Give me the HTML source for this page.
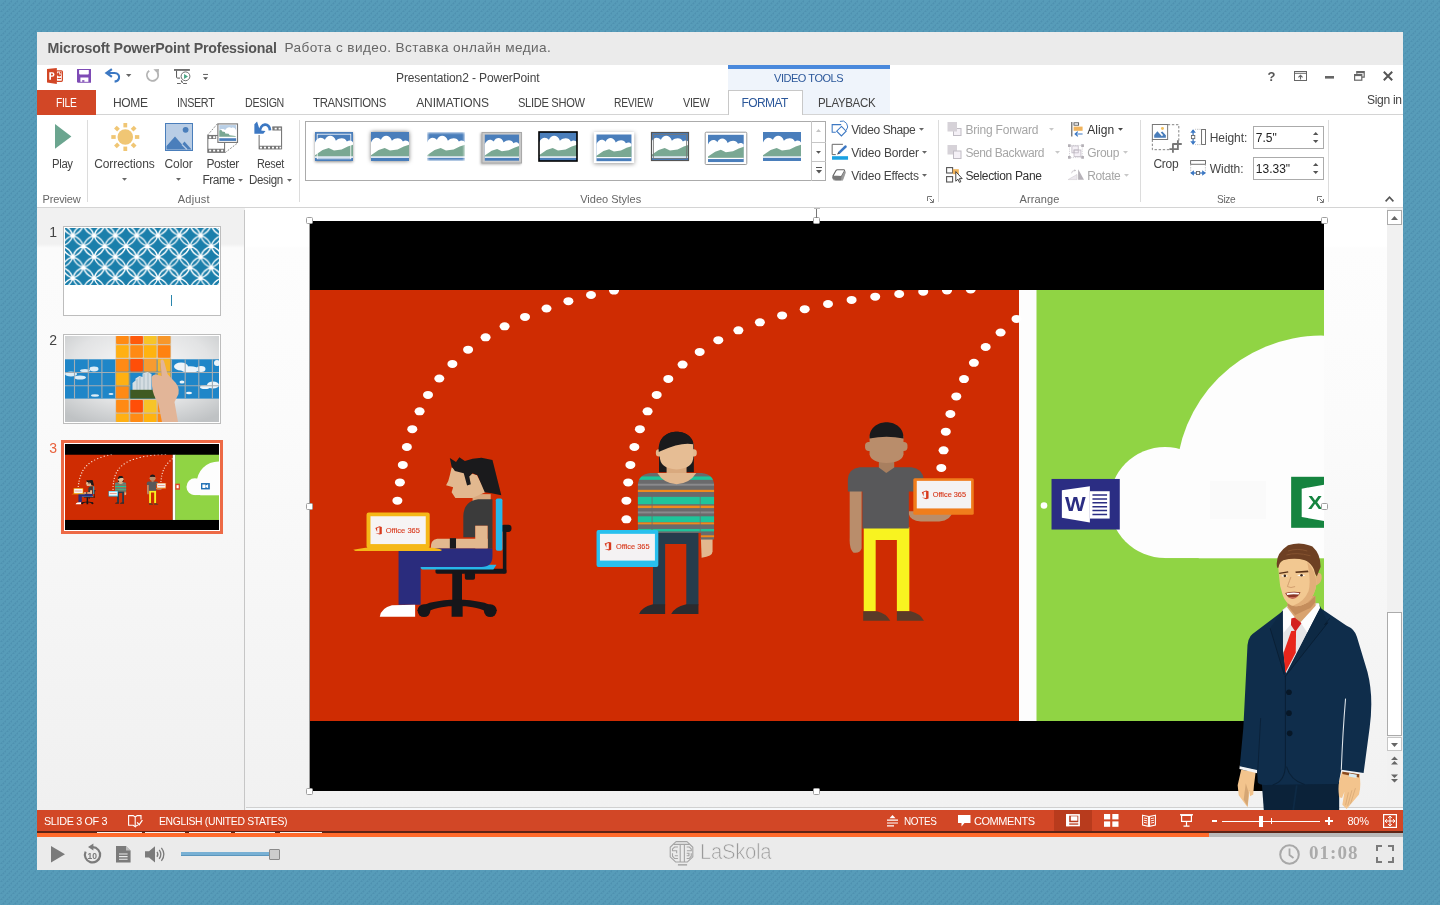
<!DOCTYPE html>
<html lang="ru">
<head>
<meta charset="utf-8">
<title>Microsoft PowerPoint Professional</title>
<style>
*{box-sizing:border-box;margin:0;padding:0}
html,body{width:1440px;height:905px;overflow:hidden}
body{font-family:"Liberation Sans","DejaVu Sans",sans-serif;font-size:12px;color:#444;
 background:#569bb8;position:relative}
.abs{position:absolute}
#win{will-change:transform;position:absolute;left:37px;top:32px;width:1366px;height:838px;background:#fff;overflow:hidden}
.t{position:absolute;white-space:nowrap;line-height:1}
svg{overflow:visible}
svg.clip{overflow:hidden}
</style>
</head>
<body>
<svg class="abs" style="left:0;top:0" width="1440" height="905"><defs><pattern id="bgp" width="6" height="6" patternUnits="userSpaceOnUse"><rect width="6" height="6" fill="#579cb9"/><g fill="#4688a9" opacity=".55"><circle cx="5.500" cy="1.500" r="1"/><circle cx="3.500" cy="3.500" r="1"/><circle cx="1.500" cy="5.500" r="1"/></g><path d="M-1 7L7 -1" stroke="#4c90af" stroke-width=".9" opacity=".35"/><path d="M-1 1L1 -1M5 7L7 5" stroke="#4c90af" stroke-width=".9" opacity=".35"/></pattern></defs><rect width="1440" height="905" fill="url(#bgp)"/></svg>
<div id="win">
<!-- p1_title -->
<div class="abs" style="left:0.0px;top:0.0px;width:1366.0px;height:33.0px;background:#ebebeb;"></div>
<span class="t" style="left:10.5px;top:8.8px;font-size:14.2px;letter-spacing:-0.17px;color:#555;font-weight:bold;">Microsoft PowerPoint Professional</span>
<span class="t" style="left:247.5px;top:9.3px;font-size:13.6px;letter-spacing:0.40px;color:#666;">Работа с видео. Вставка онлайн медиа.</span>
<svg class="abs" style="left:10.0px;top:36.0px;" width="17" height="16" viewBox="0 0 17 16"><rect x="9.200" y="2.800" width="6.200" height="10.500" rx="1" fill="#fff" stroke="#d24726" stroke-width="1.200"/>
<path d="M10.500 10.500h3.600" stroke="#d24726" stroke-width="1.100"/>
<path d="M12.200 4.200a2.200 2.200 0 1 0 2.200 2.300h-2.200z" fill="#d24726"/><path d="M12.900 3.600a2 2 0 0 1 1.900 1.900h-1.900z" fill="#d24726"/>
<path d="M0 1L9.840 -.1V15.950L0 14.600Z" fill="#d24726"/>
<path d="M2.300 4.200h2.900a2.300 2.300 0 0 1 0 4.600H4v3H2.300z M4 5.500v2h1a1 1 0 0 0 0-2z" fill="#fff" fill-rule="evenodd"/></svg>
<svg class="abs" style="left:40.0px;top:37.0px;" width="14" height="14" viewBox="0 0 14 14"><path d="M0 0h14v13.800H.8L0 13z" fill="#7e4bb5"/><path d="M2.100 .9h9.700v3.600q0 1-1 1H3.100q-1 0-1-1z" fill="#fff"/><rect x="3.400" y="8.500" width="8" height="4.300" fill="#fff"/><rect x="5.200" y="11.200" width="2.200" height="1.600" fill="#7e4bb5"/></svg>
<svg class="abs" style="left:68.0px;top:36.0px;" width="16" height="15" viewBox="0 0 16 15"><path d="M6.900 1.200L1.500 5L6.900 8.800" fill="none" stroke="#3c78c3" stroke-width="2.200" stroke-linejoin="miter"/><path d="M2.500 5H9.500C13 5 14.600 7.600 14 10.200C13.500 12.200 11.800 13.400 9.600 13.600" fill="none" stroke="#3c78c3" stroke-width="2.100"/></svg>
<svg class="abs" style="left:89.0px;top:42.0px;" width="6" height="4" viewBox="0 0 6 4"><path d="M0 0h5.400L2.700 3z" fill="#666"/></svg>
<svg class="abs" style="left:108.0px;top:36.0px;" width="15" height="15" viewBox="0 0 15 15"><path d="M4.200 2.700A5.600 5.600 0 1 0 12.600 4.800" fill="none" stroke="#b4b4b4" stroke-width="1.900"/><path d="M8.400 1.200L14 1L13.600 6.600Z" fill="#b4b4b4"/></svg>
<svg class="abs" style="left:137.0px;top:37.0px;" width="17" height="16" viewBox="0 0 17 16"><path d="M0 .95h15.900" stroke="#555" stroke-width="1.600"/><path d="M2.550 1.700v6.400q0 1 1 1h2.500" fill="none" stroke="#555" stroke-width="1"/><path d="M3 14.500h3.800M9.100 14.500h3.800" stroke="#555" stroke-width=".9"/><path d="M7.200 11.500l1.300 2.300" stroke="#444" stroke-width="1.100"/><circle cx="11.500" cy="7.300" r="4.400" fill="#fff" stroke="#666" stroke-width=".95"/><path d="M10.060 4.900L14 7.400L10.060 10z" fill="#4aa584"/></svg>
<svg class="abs" style="left:166.0px;top:42.0px;" width="6" height="7" viewBox="0 0 6 7"><path d="M.1 .45h4.900" stroke="#555" stroke-width=".95"/><path d="M.1 3.300h4.900L2.550 5.900z" fill="#555"/></svg>
<span class="t" style="left:359.0px;top:39.7px;font-size:12px;letter-spacing:-0.10px;color:#444;">Presentation2 - PowerPoint</span>
<span class="t" style="left:1230.5px;top:37.8px;font-size:13px;color:#555;font-weight:bold;">?</span>
<svg class="abs" style="left:1257.0px;top:39.0px;" width="13" height="10" viewBox="0 0 13 10"><rect x=".5" y=".5" width="12" height="9" fill="none" stroke="#666"/><path d="M.5 2.3h12" stroke="#666"/><path d="M6.5 8.6V4.4M4.4 6.3l2.1-2 2.1 2" fill="none" stroke="#666" stroke-width="1.1"/></svg>
<svg class="abs" style="left:1288.0px;top:44.0px;" width="9" height="3" viewBox="0 0 9 3"><rect width="9" height="2.6" fill="#666"/></svg>
<svg class="abs" style="left:1317.0px;top:39.0px;" width="11" height="10" viewBox="0 0 11 10"><path d="M2.8 2.8V.6h7.4v5.6H8" fill="none" stroke="#666" stroke-width="1.2"/><path d="M2.8 1.4h7.4" stroke="#666" stroke-width="1.6"/><rect x=".6" y="3.6" width="7.2" height="5.6" fill="none" stroke="#666" stroke-width="1.2"/><path d="M.6 4.3h7.2" stroke="#666" stroke-width="1.6"/></svg>
<svg class="abs" style="left:1346.0px;top:39.0px;" width="10" height="10" viewBox="0 0 10 10"><path d="M.8.8l8.4 8.4M9.2.8L.8 9.2" stroke="#555" stroke-width="2"/></svg>
<!-- p2_tabs -->
<div class="abs" style="left:691.0px;top:33.0px;width:162.0px;height:50.0px;background:#eff4fb;"></div>
<div class="abs" style="left:691.0px;top:33.0px;width:162.0px;height:4.0px;background:#4a89dc;"></div>
<span class="t" style="left:737.0px;top:40.5px;font-size:11px;letter-spacing:-0.46px;color:#2b579a;">VIDEO TOOLS</span>
<div class="abs" style="left:0.0px;top:82.0px;width:1366.0px;height:1.0px;background:#d4d4d4;"></div>
<div class="abs" style="left:0.0px;top:58.0px;width:59.0px;height:25.0px;background:#d24726;"></div>
<span class="t" style="left:19.2px;top:64.6px;font-size:12px;letter-spacing:-0.35px;transform:scaleX(0.856);transform-origin:0 0;color:#fff;">FILE</span>
<span class="t" style="left:76.0px;top:64.6px;font-size:12px;letter-spacing:-0.37px;color:#444;">HOME</span>
<span class="t" style="left:139.6px;top:64.6px;font-size:12px;letter-spacing:-0.35px;transform:scaleX(0.897);transform-origin:0 0;color:#444;">INSERT</span>
<span class="t" style="left:207.7px;top:64.6px;font-size:12px;letter-spacing:-0.35px;transform:scaleX(0.888);transform-origin:0 0;color:#444;">DESIGN</span>
<span class="t" style="left:276.4px;top:64.6px;font-size:12px;letter-spacing:-0.35px;transform:scaleX(0.951);transform-origin:0 0;color:#444;">TRANSITIONS</span>
<span class="t" style="left:379.2px;top:64.6px;font-size:12px;letter-spacing:-0.11px;color:#444;">ANIMATIONS</span>
<span class="t" style="left:480.8px;top:64.6px;font-size:12px;letter-spacing:-0.35px;transform:scaleX(0.929);transform-origin:0 0;color:#444;">SLIDE SHOW</span>
<span class="t" style="left:577.3px;top:64.6px;font-size:12px;letter-spacing:-0.35px;transform:scaleX(0.860);transform-origin:0 0;color:#444;">REVIEW</span>
<span class="t" style="left:646.3px;top:64.6px;font-size:12px;letter-spacing:-0.35px;transform:scaleX(0.901);transform-origin:0 0;color:#444;">VIEW</span>
<span class="t" style="left:781.0px;top:64.6px;font-size:12px;letter-spacing:-0.35px;transform:scaleX(0.960);transform-origin:0 0;color:#444;">PLAYBACK</span>
<div class="abs" style="left:691.0px;top:58.0px;width:75.0px;height:25.0px;background:#fff;border:1px solid #c8c8c8;border-bottom:none;"></div>
<span class="t" style="left:704.4px;top:64.6px;font-size:12px;letter-spacing:-0.55px;color:#2b579a;">FORMAT</span>
<span class="t" style="left:1330.3px;top:61.6px;font-size:12.5px;letter-spacing:-0.35px;transform:scaleX(0.969);transform-origin:0 0;color:#444;">Sign in</span>
<!-- p3_ribbon_a -->
<div class="abs" style="left:0.0px;top:175.0px;width:1366.0px;height:1.0px;background:#d4d4d4;"></div>
<svg class="abs" style="left:17.8px;top:92.4px;" width="17" height="25" viewBox="0 0 17 25"><path d="M0 0L16.4 12.4L0 24.8z" fill="#6ba58f"/></svg>
<span class="t" style="left:14.6px;top:125.7px;font-size:12px;letter-spacing:-0.35px;transform:scaleX(0.942);transform-origin:0 0;color:#444;">Play</span>
<span class="t" style="left:5.6px;top:162.0px;font-size:11px;letter-spacing:-0.17px;color:#666;">Preview</span>
<div class="abs" style="left:50.0px;top:88.0px;width:1.0px;height:82.0px;background:#dcdcdc;"></div>
<svg class="abs" style="left:73.7px;top:90.7px;" width="28.6" height="28" viewBox="0 0 28.6 28"><g transform="translate(14.3,14)"><circle r="7.8" fill="#f0c674"/><rect x="-1.9" y="-14" width="3.8" height="4.4" transform="rotate(0)" fill="#f0c674"/><rect x="-1.9" y="-14" width="3.8" height="4.4" transform="rotate(45)" fill="#f0c674"/><rect x="-1.9" y="-14" width="3.8" height="4.4" transform="rotate(90)" fill="#f0c674"/><rect x="-1.9" y="-14" width="3.8" height="4.4" transform="rotate(135)" fill="#f0c674"/><rect x="-1.9" y="-14" width="3.8" height="4.4" transform="rotate(180)" fill="#f0c674"/><rect x="-1.9" y="-14" width="3.8" height="4.4" transform="rotate(225)" fill="#f0c674"/><rect x="-1.9" y="-14" width="3.8" height="4.4" transform="rotate(270)" fill="#f0c674"/><rect x="-1.9" y="-14" width="3.8" height="4.4" transform="rotate(315)" fill="#f0c674"/></g></svg>
<span class="t" style="left:57.2px;top:125.7px;font-size:12px;letter-spacing:-0.08px;color:#444;">Corrections</span>
<svg class="abs" style="left:84.7px;top:146.0px;" width="5" height="3" viewBox="0 0 5 3"><path d="M0 0h5L2.5 2.8z" fill="#666"/></svg>
<svg class="abs" style="left:128.0px;top:91.0px;" width="28" height="28" viewBox="0 0 28 28"><rect x=".5" y=".5" width="27" height="27" fill="#b9cde5" stroke="#4a7ebb"/>
<circle cx="20.6" cy="6.8" r="2.9" fill="#4a7ebb"/>
<path d="M1.5 26.5V23L10 13.5L17 21.5L19.5 18.5L26.5 26.5Z" fill="#4a7ebb"/><path d="M17 21.5l5 5" stroke="#b9cde5" stroke-width="1.2"/></svg>
<span class="t" style="left:127.6px;top:125.7px;font-size:12px;letter-spacing:-0.14px;color:#444;">Color</span>
<svg class="abs" style="left:139.1px;top:146.0px;" width="5" height="3" viewBox="0 0 5 3"><path d="M0 0h5L2.5 2.8z" fill="#666"/></svg>
<svg class="abs" style="left:169.8px;top:90.9px;" width="32" height="30" viewBox="0 0 32 30"><g transform="translate(-6.8 -4.9) scale(.0625)">
<path d="M118 272L278 88M398 553L603 395" stroke="#777" stroke-width="14" stroke-dasharray="30 22" fill="none"/>
<rect x="122" y="278" width="268" height="270" fill="#fff" stroke="#777" stroke-width="17"/>
<path d="M122 278H255V336H122ZM122 492H390V548H122Z" fill="#777"/>
<path d="M143 292h34v30h-34zM207 292h34v30h-34zM143 508h32v28h-32zM207 508h32v28h-32zM271 508h32v28h-32zM335 508h32v28h-32z" fill="#fff"/>
<rect x="283" y="93" width="314" height="296" fill="#fff" stroke="#777" stroke-width="18"/>
<rect x="305" y="112" width="270" height="100" fill="#b9cfe6"/>
<path d="M305 200C330 160 380 170 400 190C420 150 470 130 500 160C530 140 560 160 575 200V300H305Z" fill="#fff"/>
<path d="M305 200C320 185 345 185 352 215L395 222L402 245L455 250L470 275L560 285L575 300H305Z" fill="#7aa893"/>
<rect x="305" y="322" width="270" height="43" fill="#4a7ebb"/></g></svg>
<span class="t" style="left:169.4px;top:125.7px;font-size:12px;letter-spacing:-0.38px;color:#444;">Poster</span>
<span class="t" style="left:165.5px;top:141.7px;font-size:12px;letter-spacing:-0.54px;color:#444;">Frame</span>
<svg class="abs" style="left:201.0px;top:146.8px;" width="5" height="3" viewBox="0 0 5 3"><path d="M0 0h5L2.5 2.8z" fill="#666"/></svg>
<svg class="abs" style="left:216.5px;top:89.5px;" width="30" height="28" viewBox="0 0 30 28"><g transform="translate(-53.5 -3.500) scale(.0625)">
<path d="M938 262V482H1297V138H1150" fill="none" stroke="#777" stroke-width="17"/>
<path d="M938 436H1297V490H938ZM1150 130H1297V192H1150Z" fill="#777"/>
<path d="M952 450h32v28h-32zM1016 450h32v28h-32zM1080 450h32v28h-32zM1144 450h32v28h-32zM1208 450h32v28h-32zM1264 450h26v28h-26zM1186 146h34v30h-34zM1250 146h34v30h-34z" fill="#fff"/>
<path d="M1112 190C1110 60 950 70 950 215" fill="none" stroke="#3c78c3" stroke-width="44"/>
<path d="M905 48L862 92V242H1005L1040 200L950 190Z" fill="#3c78c3"/></g></svg>
<span class="t" style="left:219.5px;top:125.7px;font-size:12px;letter-spacing:-0.35px;transform:scaleX(0.908);transform-origin:0 0;color:#444;">Reset</span>
<span class="t" style="left:212.0px;top:141.7px;font-size:12px;letter-spacing:-0.35px;transform:scaleX(0.963);transform-origin:0 0;color:#444;">Design</span>
<svg class="abs" style="left:250.4px;top:146.8px;" width="5" height="3" viewBox="0 0 5 3"><path d="M0 0h5L2.5 2.8z" fill="#666"/></svg>
<span class="t" style="left:140.7px;top:162.0px;font-size:11px;letter-spacing:0.27px;color:#666;">Adjust</span>
<div class="abs" style="left:262.0px;top:88.0px;width:1.0px;height:82.0px;background:#dcdcdc;"></div>
<!-- p3_ribbon_b -->
<div class="abs" style="left:268.0px;top:89.0px;width:521.0px;height:60.0px;background:#fff;border:1px solid #ababab;"></div>
<svg class="abs" style="left:278.0px;top:100.0px;filter:drop-shadow(0 1px 1.500px rgba(0,0,0,.45));" width="38" height="29" viewBox="0 0 38 29"><rect width="38" height="29" fill="#4a7ebb"/><path d="M0 10.4C1.9 5.8 6.5 3.8 9.9 7.8C12.5 2.0 19.0 2.9 20.9 8.7C25.1 4.9 30.4 5.8 31.9 9.6C34.2 7.8 36.9 8.7 38 10.4V24.6H0Z" fill="#fff"/><path d="M0 23.2L7.6 18.0L13.7 16.0L19.0 18.6L26.6 17.4L32.7 14.5L38 12.8V24.6H0Z" fill="#7aa893"/><rect y="24.5" width="38" height="1.3" fill="#fff"/><rect x="2.2" y="2.2" width="33.600" height="24.600" fill="none" stroke="#fff" stroke-width=".8"/></svg>
<svg class="abs" style="left:334.0px;top:100.0px;filter:drop-shadow(0 0 2px rgba(0,0,0,.55));" width="38" height="29" viewBox="0 0 38 29"><rect width="38" height="29" fill="#4a7ebb"/><path d="M0 10.4C1.9 5.8 6.5 3.8 9.9 7.8C12.5 2.0 19.0 2.9 20.9 8.7C25.1 4.9 30.4 5.8 31.9 9.6C34.2 7.8 36.9 8.7 38 10.4V24.6H0Z" fill="#fff"/><path d="M0 23.2L7.6 18.0L13.7 16.0L19.0 18.6L26.6 17.4L32.7 14.5L38 12.8V24.6H0Z" fill="#7aa893"/><rect y="24.5" width="38" height="1.3" fill="#fff"/></svg>
<svg class="abs" style="left:390.0px;top:100.0px;" width="38" height="29" viewBox="0 0 38 29"><defs><filter id="bl" x="-20%" y="-20%" width="140%" height="140%"><feGaussianBlur stdDeviation="1.1"/></filter></defs><rect width="38" height="29" fill="#4a7ebb"/><path d="M0 10.4C1.9 5.8 6.5 3.8 9.9 7.8C12.5 2.0 19.0 2.9 20.9 8.7C25.1 4.9 30.4 5.8 31.9 9.6C34.2 7.8 36.9 8.7 38 10.4V24.6H0Z" fill="#fff"/><path d="M0 23.2L7.6 18.0L13.7 16.0L19.0 18.6L26.6 17.4L32.7 14.5L38 12.8V24.6H0Z" fill="#7aa893"/><rect y="24.5" width="38" height="1.3" fill="#fff"/><rect x="-1" y="-1" width="40" height="31" fill="none" stroke="#fff" stroke-width="3.400" filter="url(#bl)"/></svg>
<svg class="abs" style="left:446.0px;top:100.0px;filter:drop-shadow(-1px 1px 1px rgba(0,0,0,.3));" width="38" height="29" viewBox="0 0 38 29"><rect x="-1" y=".5" width="39.500" height="30.500" fill="#c9c9c9" stroke="#a9a9a9" stroke-width="1"/><g transform="translate(1.8,2.600) scale(.9)"><rect width="38" height="29" fill="#4a7ebb"/><path d="M0 10.4C1.9 5.8 6.5 3.8 9.9 7.8C12.5 2.0 19.0 2.9 20.9 8.7C25.1 4.9 30.4 5.8 31.9 9.6C34.2 7.8 36.9 8.7 38 10.4V24.6H0Z" fill="#fff"/><path d="M0 23.2L7.6 18.0L13.7 16.0L19.0 18.6L26.6 17.4L32.7 14.5L38 12.8V24.6H0Z" fill="#7aa893"/><rect y="24.5" width="38" height="1.3" fill="#fff"/></g></svg>
<svg class="abs" style="left:502.0px;top:100.0px;" width="38" height="29" viewBox="0 0 38 29"><rect width="38" height="29" fill="#4a7ebb"/><path d="M0 10.4C1.9 5.8 6.5 3.8 9.9 7.8C12.5 2.0 19.0 2.9 20.9 8.7C25.1 4.9 30.4 5.8 31.9 9.6C34.2 7.8 36.9 8.7 38 10.4V24.6H0Z" fill="#fff"/><path d="M0 23.2L7.6 18.0L13.7 16.0L19.0 18.6L26.6 17.4L32.7 14.5L38 12.8V24.6H0Z" fill="#7aa893"/><rect y="24.5" width="38" height="1.3" fill="#fff"/><rect x="0" y="0" width="38" height="29" fill="none" stroke="#000" stroke-width="1.6"/></svg>
<svg class="abs" style="left:558.0px;top:100.0px;filter:drop-shadow(0 1px 2px rgba(0,0,0,.4));" width="38" height="29" viewBox="0 0 38 29"><rect x="-1.200" y="0" width="40.400" height="31" fill="#fff"/><g transform="translate(1.500,2.500) scale(.92)"><rect width="38" height="29" fill="#4a7ebb"/><path d="M0 10.4C1.9 5.8 6.5 3.8 9.9 7.8C12.5 2.0 19.0 2.9 20.9 8.7C25.1 4.9 30.4 5.8 31.9 9.6C34.2 7.8 36.9 8.7 38 10.4V24.6H0Z" fill="#fff"/><path d="M0 23.2L7.6 18.0L13.7 16.0L19.0 18.6L26.6 17.4L32.7 14.5L38 12.8V24.6H0Z" fill="#7aa893"/><rect y="24.5" width="38" height="1.3" fill="#fff"/></g></svg>
<svg class="abs" style="left:614.0px;top:100.0px;" width="38" height="29" viewBox="0 0 38 29"><rect width="38" height="29" fill="#4a7ebb"/><path d="M0 10.4C1.9 5.8 6.5 3.8 9.9 7.8C12.5 2.0 19.0 2.9 20.9 8.7C25.1 4.9 30.4 5.8 31.9 9.6C34.2 7.8 36.9 8.7 38 10.4V24.6H0Z" fill="#fff"/><path d="M0 23.2L7.6 18.0L13.7 16.0L19.0 18.6L26.6 17.4L32.7 14.5L38 12.8V24.6H0Z" fill="#7aa893"/><rect y="24.5" width="38" height="1.3" fill="#fff"/><rect x=".5" y=".5" width="37" height="28" fill="none" stroke="#555" stroke-width="1.2"/><rect x="2.5" y="2.500" width="33" height="24" fill="none" stroke="#777" stroke-width=".8"/></svg>
<svg class="abs" style="left:670.0px;top:100.0px;" width="38" height="29" viewBox="0 0 38 29"><rect x="-1.800" y=".2" width="41.600" height="32.300" rx="1" fill="#fff" stroke="#999" stroke-width="1"/><g transform="translate(1,2.800) scale(.94)"><rect width="38" height="29" fill="#4a7ebb"/><path d="M0 10.4C1.9 5.8 6.5 3.8 9.9 7.8C12.5 2.0 19.0 2.9 20.9 8.7C25.1 4.9 30.4 5.8 31.9 9.6C34.2 7.8 36.9 8.7 38 10.4V24.6H0Z" fill="#fff"/><path d="M0 23.2L7.6 18.0L13.7 16.0L19.0 18.6L26.6 17.4L32.7 14.5L38 12.8V24.6H0Z" fill="#7aa893"/><rect y="24.5" width="38" height="1.3" fill="#fff"/></g></svg>
<svg class="abs" style="left:726.0px;top:100.0px;" width="38" height="29" viewBox="0 0 38 29"><rect width="38" height="29" fill="#4a7ebb"/><path d="M0 10.4C1.9 5.8 6.5 3.8 9.9 7.8C12.5 2.0 19.0 2.9 20.9 8.7C25.1 4.9 30.4 5.8 31.9 9.6C34.2 7.8 36.9 8.7 38 10.4V24.6H0Z" fill="#fff"/><path d="M0 23.2L7.6 18.0L13.7 16.0L19.0 18.6L26.6 17.4L32.7 14.5L38 12.8V24.6H0Z" fill="#7aa893"/><rect y="24.5" width="38" height="1.3" fill="#fff"/></svg>
<div class="abs" style="left:774.0px;top:89.0px;width:1.0px;height:60.0px;background:#c6c6c6;"></div>
<div class="abs" style="left:774.0px;top:110.0px;width:15.0px;height:1.0px;background:#c6c6c6;"></div>
<div class="abs" style="left:774.0px;top:129.0px;width:15.0px;height:1.0px;background:#c6c6c6;"></div>
<svg class="abs" style="left:779.0px;top:97.0px;" width="5" height="3" viewBox="0 0 5 3"><path d="M0 3h5L2.5 0z" fill="#c4c4c4"/></svg>
<svg class="abs" style="left:779.0px;top:118.6px;" width="5" height="3" viewBox="0 0 5 3"><path d="M0 0h5L2.5 2.8z" fill="#555"/></svg>
<svg class="abs" style="left:778.5px;top:134.5px;" width="6" height="8" viewBox="0 0 6 8"><path d="M0 .5h6" stroke="#555" stroke-width="1"/><path d="M0 3h6L3 6.500z" fill="#555"/></svg>
<span class="t" style="left:543.2px;top:162.0px;font-size:11px;color:#666;">Video Styles</span>
<svg class="abs" style="left:789.0px;top:86.0px;" width="30" height="68" viewBox="0 0 30 68"><g transform="scale(.07519)" fill="none">
<path d="M195 95V88H82V190H130" stroke="#3c78c3" stroke-width="14"/><path d="M185 45A75 75 0 0 1 268 165" stroke="#3c78c3" stroke-width="13"/><path d="M205 113L268 176L205 239L142 176Z" fill="#fff" stroke="#3c78c3" stroke-width="14"/>
<path d="M225 350H82V487H130" stroke="#666" stroke-width="13"/><path d="M150 487L165 450L250 365Q262 358 272 368Q282 380 272 392L188 472Z" fill="#3c78c3"/><path d="M150 487l14-36l22 22z" fill="#555"/><rect x="80" y="508" width="213" height="47" fill="#1ba1e2"/>
<g style="filter:drop-shadow(0 12px 10px rgba(0,0,0,.35))"><path d="M92 772L135 696Q140 688 152 688H235Q250 690 246 704L205 778Z" fill="#fff" stroke="#666" stroke-width="15" stroke-linejoin="round"/><path d="M205 778L246 704Q262 700 262 718L228 812Q222 826 205 824Z" fill="#999"/><path d="M92 772L205 778V824H130Q88 818 84 790Z" fill="#777"/></g></g></svg>
<span class="t" style="left:814.2px;top:91.8px;font-size:12px;letter-spacing:-0.39px;color:#444;">Video Shape</span>
<svg class="abs" style="left:881.6px;top:96.2px;" width="5" height="3" viewBox="0 0 5 3"><path d="M0 0h5L2.5 2.8z" fill="#666"/></svg>
<span class="t" style="left:814.2px;top:114.8px;font-size:12px;letter-spacing:-0.18px;color:#444;">Video Border</span>
<svg class="abs" style="left:884.6px;top:119.2px;" width="5" height="3" viewBox="0 0 5 3"><path d="M0 0h5L2.5 2.8z" fill="#666"/></svg>
<span class="t" style="left:814.2px;top:138.1px;font-size:12px;letter-spacing:-0.21px;color:#444;">Video Effects</span>
<svg class="abs" style="left:884.6px;top:141.8px;" width="5" height="3" viewBox="0 0 5 3"><path d="M0 0h5L2.5 2.8z" fill="#666"/></svg>
<svg class="abs" style="left:890.0px;top:164.4px;" width="7" height="7" viewBox="0 0 7 7"><path d="M.5 5V.5H5" fill="none" stroke="#777" stroke-width="1"/><path d="M2.600 2.600l3.600 3.600M6.500 3v3.500H3" fill="none" stroke="#777" stroke-width="1"/></svg>
<div class="abs" style="left:901.0px;top:88.0px;width:1.0px;height:82.0px;background:#dcdcdc;"></div>
<!-- p3_ribbon_c -->
<svg class="abs" style="left:909.5px;top:90.0px;" width="15" height="14" viewBox="0 0 15 14"><rect x="6.500" y="6.500" width="7.500" height="7" fill="#f4f0f6" stroke="#c0bcc4" stroke-width="1"/><rect x=".5" y="0" width="9.500" height="9.500" fill="#d6d2d8"/></svg>
<span class="t" style="left:928.4px;top:91.8px;font-size:12px;letter-spacing:-0.20px;color:#a6a6a6;">Bring Forward</span>
<svg class="abs" style="left:1012.0px;top:96.2px;" width="5" height="3" viewBox="0 0 5 3"><path d="M0 0h5L2.5 2.8z" fill="#c8c8c8"/></svg>
<svg class="abs" style="left:909.5px;top:113.0px;" width="15" height="14" viewBox="0 0 15 14"><rect x=".5" y="0" width="9.500" height="9.500" fill="#d6d2d8"/><rect x="6.500" y="6" width="7.500" height="7.500" fill="#f4f0f6" stroke="#c0bcc4" stroke-width="1"/></svg>
<span class="t" style="left:928.4px;top:114.8px;font-size:12px;letter-spacing:-0.41px;color:#a6a6a6;">Send Backward</span>
<svg class="abs" style="left:1017.8px;top:119.2px;" width="5" height="3" viewBox="0 0 5 3"><path d="M0 0h5L2.5 2.8z" fill="#c8c8c8"/></svg>
<svg class="abs" style="left:909.0px;top:135.0px;" width="16" height="16" viewBox="0 0 16 16"><rect x=".6" y=".6" width="6" height="5.400" fill="#fff" stroke="#555" stroke-width="1.100"/><rect x=".6" y="9.600" width="6" height="5.400" fill="#fff" stroke="#555" stroke-width="1.100"/><rect x="6.800" y="2.200" width="6" height="5" fill="#f0b35c"/><path d="M9.800 4.600v9.600l2.200-2l1.400 3.200l1.400-.6l-1.400-3.200h2.800z" fill="#fff" stroke="#333" stroke-width=".9" stroke-linejoin="round"/></svg>
<span class="t" style="left:928.4px;top:138.1px;font-size:12px;letter-spacing:-0.32px;color:#333;">Selection Pane</span>
<svg class="abs" style="left:1033.5px;top:89.5px;" width="13" height="15" viewBox="0 0 13 15"><path d="M.8 0v14.600" stroke="#555" stroke-width="1.100"/><rect x="3" y=".8" width="4.600" height="2.400" fill="#fff" stroke="#555" stroke-width=".9"/><rect x="2.600" y="4.600" width="9" height="4.200" fill="#f0b35c"/><path d="M11.600 12H4.400M6.800 9.600L4.200 12l2.600 2.400" fill="none" stroke="#3c78c3" stroke-width="1.200"/></svg>
<span class="t" style="left:1050.2px;top:91.8px;font-size:12px;letter-spacing:0.08px;color:#333;">Align</span>
<svg class="abs" style="left:1081.0px;top:96.2px;" width="5" height="3" viewBox="0 0 5 3"><path d="M0 0h5L2.5 2.8z" fill="#444"/></svg>
<svg class="abs" style="left:1025.0px;top:86.0px;" width="30" height="68" viewBox="0 0 30 68"><g transform="scale(.07511)" fill="none">
<path d="M100 370V522M270 370V522M100 365H270M100 527H270" stroke="#bdb8c0" stroke-width="9" stroke-dasharray="12 12"/>
<path d="M80 350h36v36h-36zM256 350h36v36h-36zM80 506h36v36h-36zM256 506h36v36h-36z" fill="#b4b0b6"/>
<rect x="132" y="372" width="84" height="92" fill="#f4f0f6" stroke="#bcb6c0" stroke-width="10"/><rect x="160" y="426" width="92" height="88" fill="#f4f0f6" stroke="#bcb6c0" stroke-width="10"/><rect x="160" y="426" width="56" height="38" fill="none" stroke="#bcb6c0" stroke-width="10"/>
<path d="M82 820H200V752Z" fill="#ece8ee" stroke="#ccc8ce" stroke-width="7"/><path d="M215 822H293L215 682Z" fill="#b6b2b8"/>
<path d="M128 736Q126 702 172 698" stroke="#bcb8be" stroke-width="9"/><path d="M166 682L188 698L166 712Z" fill="#bcb8be"/></g></svg>
<span class="t" style="left:1050.2px;top:114.8px;font-size:12px;letter-spacing:-0.31px;color:#a6a6a6;">Group</span>
<svg class="abs" style="left:1086.2px;top:119.2px;" width="5" height="3" viewBox="0 0 5 3"><path d="M0 0h5L2.5 2.8z" fill="#c8c8c8"/></svg>
<span class="t" style="left:1050.2px;top:138.1px;font-size:12px;letter-spacing:-0.35px;color:#a6a6a6;">Rotate</span>
<svg class="abs" style="left:1086.8px;top:141.8px;" width="5" height="3" viewBox="0 0 5 3"><path d="M0 0h5L2.5 2.8z" fill="#c8c8c8"/></svg>
<span class="t" style="left:982.4px;top:162.0px;font-size:11px;letter-spacing:0.16px;color:#666;">Arrange</span>
<div class="abs" style="left:1103.0px;top:88.0px;width:1.0px;height:82.0px;background:#dcdcdc;"></div>
<svg class="abs" style="left:1108.0px;top:86.0px;" width="70" height="64" viewBox="0 0 70 64"><g transform="scale(.070721)" fill="none">
<path d="M322 95H478V320M104 305V448H345" stroke="#777" stroke-width="13" stroke-dasharray="34 24"/>
<rect x="104" y="92" width="216" height="212" fill="#fff" stroke="#777" stroke-width="14"/>
<path d="M130 280V240L175 188L240 258L255 240L222 205L245 190L295 245V280Z" fill="#4a7ebb"/><circle cx="247" cy="148" r="21" fill="#f0c060"/>
<path d="M465 315V440H345M390 368H520M395 360V490" stroke="#777" stroke-width="26"/>
<path d="M680 170V370" stroke="#3c78c3" stroke-width="18"/><path d="M640 208L680 160L720 208ZM640 328L680 380L720 328Z" fill="#3c78c3"/>
<rect x="656" y="248" width="48" height="44" fill="#fff" stroke="#666" stroke-width="12"/>
<path d="M712 160H790M712 376H790" stroke="#888" stroke-width="10" stroke-dasharray="10 14"/>
<rect x="800" y="162" width="56" height="212" fill="#fff" stroke="#666" stroke-width="13"/>
<rect x="645" y="602" width="210" height="52" fill="#fff" stroke="#666" stroke-width="13"/>
<path d="M646 668V770M854 668V770" stroke="#888" stroke-width="10" stroke-dasharray="10 14"/>
<path d="M655 778H850" stroke="#3c78c3" stroke-width="18"/><path d="M692 738L640 778L692 818ZM808 738L862 778L808 818Z" fill="#3c78c3"/>
<rect x="727" y="756" width="46" height="44" fill="#fff" stroke="#666" stroke-width="12"/></g></svg>
<span class="t" style="left:1116.5px;top:125.8px;font-size:12px;letter-spacing:-0.30px;color:#444;">Crop</span>
<span class="t" style="left:1172.8px;top:99.5px;font-size:12px;letter-spacing:-0.09px;color:#444;">Height:</span>
<div class="abs" style="left:1216.0px;top:94.0px;width:71.0px;height:23.0px;background:#fff;border:1px solid #ababab;"></div>
<span class="t" style="left:1218.8px;top:99.5px;font-size:12px;color:#222;">7.5"</span>
<svg class="abs" style="left:1275.5px;top:100.0px;" width="6" height="11" viewBox="0 0 6 11"><path d="M0 3h5.400L2.700 0z" fill="#555"/><path d="M0 8h5.400L2.700 11z" fill="#555"/></svg>
<span class="t" style="left:1172.8px;top:130.8px;font-size:12px;letter-spacing:-0.06px;color:#444;">Width:</span>
<div class="abs" style="left:1216.0px;top:125.0px;width:71.0px;height:23.0px;background:#fff;border:1px solid #ababab;"></div>
<span class="t" style="left:1218.8px;top:130.8px;font-size:12px;color:#222;">13.33"</span>
<svg class="abs" style="left:1275.5px;top:131.0px;" width="6" height="11" viewBox="0 0 6 11"><path d="M0 3h5.400L2.700 0z" fill="#555"/><path d="M0 8h5.400L2.700 11z" fill="#555"/></svg>
<span class="t" style="left:1179.7px;top:162.0px;font-size:11px;letter-spacing:-0.35px;transform:scaleX(0.919);transform-origin:0 0;color:#666;">Size</span>
<svg class="abs" style="left:1280.0px;top:164.4px;" width="7" height="7" viewBox="0 0 7 7"><path d="M.5 5V.5H5" fill="none" stroke="#777" stroke-width="1"/><path d="M2.600 2.600l3.600 3.600M6.500 3v3.500H3" fill="none" stroke="#777" stroke-width="1"/></svg>
<div class="abs" style="left:1291.0px;top:88.0px;width:1.0px;height:82.0px;background:#dcdcdc;"></div>
<svg class="abs" style="left:1347.5px;top:164.0px;" width="9" height="6" viewBox="0 0 9 6"><path d="M.6 5.400L4.500 1.200L8.400 5.400" fill="none" stroke="#555" stroke-width="1.600"/></svg>
<!-- p4_work -->
<div class="abs" style="left:0.0px;top:176.0px;width:208.0px;height:602.0px;background:linear-gradient(#f1f1f1 0,#f1f1f1 36px,#fbfbfb 40px,#fafafa 35%,#f0f0f0 100%);"></div>
<div class="abs" style="left:207.0px;top:178.0px;width:1.0px;height:600.0px;background:#c6c6c6;"></div>
<div class="abs" style="left:208.0px;top:176.0px;width:1142.0px;height:602.0px;background:linear-gradient(#fff 0,#fff 38px,#fdfdfd 40px,#fbfbfb 35%,#f1f1f1 100%);"></div>
<span class="t" style="left:12.3px;top:192.7px;font-size:14px;color:#444;">1</span>
<span class="t" style="left:12.3px;top:300.7px;font-size:14px;color:#444;">2</span>
<span class="t" style="left:12.3px;top:408.7px;font-size:14px;color:#e8613c;">3</span>
<!-- p4b_thumbs -->
<div class="abs" style="left:26.0px;top:194.0px;width:158.0px;height:90.0px;background:#fff;border:1px solid #bdbdbd;"></div>
<svg class="abs" style="left:28.0px;top:196.0px;" width="154" height="57" viewBox="0 0 154 57"><defs><pattern id="shp" width="21.3" height="21.3" patternUnits="userSpaceOnUse" x="7.760" y="7.500"><rect width="21.3" height="21.3" fill="#1b7fab"/><path d="M0.00 0.00Q2.43 8.22 10.65 10.65Q8.22 2.43 0.00 0.00ZM10.65 10.65Q13.08 18.87 21.30 21.30Q18.87 13.08 10.65 10.65ZM21.30 0.00Q13.08 2.43 10.65 10.65Q18.87 8.22 21.30 0.00ZM10.65 10.65Q2.43 13.08 0.00 21.30Q8.22 18.87 10.65 10.65Z" fill="none" stroke="#fff" stroke-width="1.300" stroke-linejoin="round"/></pattern></defs><rect width="154" height="57" fill="url(#shp)"/></svg>
<div class="abs" style="left:134.0px;top:262.5px;width:1.0px;height:11.0px;background:#2a86ad;"></div>
<div class="abs" style="left:26.0px;top:302.0px;width:158.0px;height:90.0px;background:#fff;border:1px solid #bdbdbd;"></div>
<svg class="abs clip" style="left:28.0px;top:304.0px;" width="154" height="86" viewBox="0 0 154 86"><defs><radialGradient id="g2" cx=".5" cy=".35" r=".75"><stop offset="0" stop-color="#fbfbfb"/><stop offset=".6" stop-color="#e2e3e4"/><stop offset="1" stop-color="#bfc2c4"/></radialGradient></defs><rect width="154" height="86" fill="url(#g2)"/><rect x="0" y="23.300" width="154" height="39.300" fill="#1f86c8"/><g fill="#fff" opacity=".92"><ellipse cx="116" cy="30.500" rx="7" ry="4"/><ellipse cx="125" cy="33.500" rx="9" ry="3.200"/><ellipse cx="136" cy="33" rx="4.500" ry="3"/><ellipse cx="152" cy="27" rx="3" ry="3"/><ellipse cx="148" cy="49" rx="6" ry="3.600"/><ellipse cx="140" cy="51" rx="5" ry="2"/><ellipse cx="117" cy="46" rx="2.500" ry="1.500"/><ellipse cx="124" cy="57" rx="3" ry="1.200"/></g><g fill="#fff" opacity=".85"><ellipse cx="29" cy="33" rx="4.500" ry="2.400"/><ellipse cx="20" cy="34.500" rx="5" ry="1.600"/><ellipse cx="6" cy="38" rx="6" ry="2.400"/><ellipse cx="15" cy="41.500" rx="6" ry="2"/><ellipse cx="30" cy="59.500" rx="4" ry="1.200"/><ellipse cx="46" cy="58" rx="2.500" ry="1"/></g><path d="M9.5 23.300V62.600M23.3 23.300V62.600M36.9 23.300V62.600M50.6 23.300V62.600M106.5 23.300V62.600M120.2 23.300V62.600M133.8 23.300V62.600M147.4 23.300V62.600M0 36.500H154M0 49.750H154" stroke="#a3adb3" stroke-width="1.100" fill="none"/><rect x="50.600" y="0" width="55.500" height="86" fill="#c9a26a" opacity=".55"/><rect x="51.1" y="0" width="12.600" height="7.9" rx=".8" fill="#ff8a14"/><rect x="65.3" y="0" width="12.600" height="7.9" rx=".8" fill="#ff5a0c"/><rect x="78.9" y="0" width="12.600" height="7.9" rx=".8" fill="#f7c428"/><rect x="92.8" y="0" width="12.600" height="7.9" rx=".8" fill="#f7972a"/><rect x="51.1" y="9.3" width="12.600" height="12.5" rx=".8" fill="#ffb013"/><rect x="65.3" y="9.3" width="12.600" height="12.5" rx=".8" fill="#ff8a14"/><rect x="78.9" y="9.3" width="12.600" height="12.5" rx=".8" fill="#ffb30f"/><rect x="92.8" y="9.3" width="12.600" height="12.5" rx=".8" fill="#ff8210"/><rect x="51.1" y="22.9" width="12.600" height="12.5" rx=".8" fill="#ff8a14"/><rect x="65.3" y="22.9" width="12.600" height="12.5" rx=".8" fill="#ff4e08"/><rect x="78.9" y="22.9" width="12.600" height="12.5" rx=".8" fill="#f79b30"/><rect x="92.8" y="22.9" width="12.600" height="12.5" rx=".8" fill="#f7b428"/><rect x="51.1" y="36.8" width="12.600" height="12.5" rx=".8" fill="#ffb013"/><rect x="92.8" y="36.8" width="12.600" height="12.5" rx=".8" fill="#f7b428"/><rect x="51.1" y="50.4" width="12.600" height="12.1" rx=".8" fill="#ff8a14"/><rect x="92.8" y="50.4" width="12.600" height="12.1" rx=".8" fill="#ff8a14"/><rect x="51.1" y="63.9" width="12.600" height="12.5" rx=".8" fill="#ff8a14"/><rect x="65.3" y="63.9" width="12.600" height="12.5" rx=".8" fill="#ff4e08"/><rect x="78.9" y="63.9" width="12.600" height="12.5" rx=".8" fill="#f7c428"/><rect x="92.8" y="63.9" width="12.600" height="12.5" rx=".8" fill="#ff8a14"/><rect x="51.1" y="77.8" width="12.600" height="8.2" rx=".8" fill="#ffb013"/><rect x="65.3" y="77.8" width="12.600" height="8.2" rx=".8" fill="#ff8a14"/><rect x="78.9" y="77.8" width="12.600" height="8.2" rx=".8" fill="#ffb30f"/><rect x="92.8" y="77.8" width="12.600" height="8.2" rx=".8" fill="#ff8a14"/><rect x="65.300" y="36.800" width="25" height="25.700" fill="#1f86c8"/><path d="M67.500 54V47l3-2.500v-2l4-2.500l3 1v-3.500l5-1.500l4 2v17z" fill="#d5dde2"/><path d="M72 54V43M75 54V41M79 54V38M83 54V37" stroke="#9fb0ba" stroke-width=".7"/><rect x="65.300" y="53.800" width="25" height="8.700" fill="#3f5a22"/><path d="M95.500 24.500Q97.500 22.500 99 25L102.500 38L108 44Q115 50 113.500 58L109.500 66L113 86H97L93 66Q88 60 87 50L86.500 41Q88 38 91 38.500L96.500 40Z" fill="#e2b598"/><path d="M96.500 40L95 27" stroke="#c99a7c" stroke-width=".6" fill="none"/></svg>
<div class="abs" style="left:24.0px;top:408.0px;width:162.0px;height:93.7px;background:#fff;border:3px solid #ed6a46;"></div>
<svg class="abs clip" style="left:28px;top:411.9px" width="154.100" height="86.300" viewBox="310 221 1014 568" preserveAspectRatio="none"><rect x="310" y="221" width="1014" height="570" fill="#000"/><clipPath id="vidm"><rect x="310" y="290" width="1014" height="431"/></clipPath><g clip-path="url(#vidm)"><rect x="310" y="290" width="709" height="431" fill="#cf2c02"/><rect x="1019" y="290" width="19" height="431" fill="#fdfdfd"/><rect x="1036.500" y="290" width="288" height="431" fill="#90d444"/><g fill="#f3d9cc"><ellipse cx="397.4" cy="500.7" rx="5" ry="4"/><ellipse cx="399.9" cy="482.4" rx="5" ry="4"/><ellipse cx="402.8" cy="464.9" rx="5" ry="4"/><ellipse cx="406.9" cy="447" rx="5" ry="4"/><ellipse cx="412.3" cy="429.2" rx="5" ry="4"/><ellipse cx="419.6" cy="411.3" rx="5" ry="4"/><ellipse cx="428" cy="394.9" rx="5" ry="4"/><ellipse cx="439.3" cy="378.5" rx="5" ry="4"/><ellipse cx="452.4" cy="363.9" rx="5" ry="4"/><ellipse cx="468.1" cy="349.7" rx="5" ry="4"/><ellipse cx="485.6" cy="337.3" rx="5" ry="4"/><ellipse cx="504.6" cy="326.3" rx="5" ry="4"/><ellipse cx="525" cy="316.9" rx="5" ry="4"/><ellipse cx="546.5" cy="308.5" rx="5" ry="4"/><ellipse cx="568.4" cy="301.2" rx="5" ry="4"/><ellipse cx="591" cy="295" rx="5" ry="4"/><ellipse cx="614" cy="290.6" rx="5" ry="4"/><ellipse cx="626.4" cy="519.3" rx="5" ry="4"/><ellipse cx="626.4" cy="500.7" rx="5" ry="4"/><ellipse cx="628.2" cy="482.4" rx="5" ry="4"/><ellipse cx="630.4" cy="464.9" rx="5" ry="4"/><ellipse cx="634.4" cy="447" rx="5" ry="4"/><ellipse cx="639.9" cy="429.2" rx="5" ry="4"/><ellipse cx="647.6" cy="411.3" rx="5" ry="4"/><ellipse cx="656.7" cy="394.9" rx="5" ry="4"/><ellipse cx="668.3" cy="378.9" rx="5" ry="4"/><ellipse cx="682.6" cy="364.6" rx="5" ry="4"/><ellipse cx="699.7" cy="351.9" rx="5" ry="4"/><ellipse cx="718.3" cy="340.2" rx="5" ry="4"/><ellipse cx="738.4" cy="330.3" rx="5" ry="4"/><ellipse cx="759.9" cy="322.3" rx="5" ry="4"/><ellipse cx="782.1" cy="315.4" rx="5" ry="4"/><ellipse cx="804.7" cy="309.2" rx="5" ry="4"/><ellipse cx="828" cy="304" rx="5" ry="4"/><ellipse cx="851.6" cy="299.9" rx="5" ry="4"/><ellipse cx="875.2" cy="296.7" rx="5" ry="4"/><ellipse cx="899.2" cy="294" rx="5" ry="4"/><ellipse cx="923.2" cy="291.7" rx="5" ry="4"/><ellipse cx="947" cy="290.4" rx="5" ry="4"/><ellipse cx="970.7" cy="289.5" rx="5" ry="4"/><ellipse cx="941.3" cy="467.9" rx="5" ry="4"/><ellipse cx="943.6" cy="450.3" rx="5" ry="4"/><ellipse cx="945.8" cy="431.7" rx="5" ry="4"/><ellipse cx="950.4" cy="414" rx="5" ry="4"/><ellipse cx="956.3" cy="396.4" rx="5" ry="4"/><ellipse cx="964" cy="379.1" rx="5" ry="4"/><ellipse cx="973.9" cy="362.8" rx="5" ry="4"/><ellipse cx="985.7" cy="347" rx="5" ry="4"/><ellipse cx="1000.6" cy="332.5" rx="5" ry="4"/><ellipse cx="1016.5" cy="318.9" rx="5" ry="4"/></g><g transform="translate(340 440) scale(.22099)"><g fill="#16161a"><rect x="728" y="384" width="48" height="32" rx="14"/><rect x="737" y="398" width="16" height="205"/><rect x="432" y="583" width="321" height="22" rx="8"/><rect x="565" y="600" width="46" height="32" rx="8"/><rect x="508" y="600" width="44" height="150"/><path d="M350 772C370 735 450 725 530 722C610 725 690 735 710 772L690 790C640 760 590 752 555 752V800H505V752C470 752 420 760 370 790Z"/><circle cx="380" cy="772" r="29"/><circle cx="680" cy="772" r="29"/></g><rect x="705" y="265" width="30" height="236" rx="8" fill="#27b7ea"/><path d="M345 565H708L694 586H372Z" fill="#27b7ea"/><path d="M265 490H690V525Q690 575 640 575H365V745H265Z" fill="#2a2c7d"/><path d="M180 800Q186 760 235 748L340 745V800Z" fill="#fff"/><rect x="600" y="245" width="82" height="38" fill="#d9a97e"/><path d="M505 125L560 140L620 160L660 235L600 262H522L505 236L512 214L480 205L490 186L497 160Z" fill="#e2b88f"/><path d="M497 82L525 100L540 78L565 95L600 85L640 80L690 90L730 250L680 240L655 236L622 160L600 150L585 165L592 200L575 206L560 150L520 140L505 120Z" fill="#1a1a1c"/><path d="M690 268H625Q560 276 558 345V440H612V388H668V490H690Z" fill="#3b3b3b"/><rect x="612" y="388" width="56" height="102" fill="#e2b88f"/><path d="M668 447H440Q408 452 412 490H668Z" fill="#e2b88f"/><rect x="497" y="444" width="28" height="47" fill="#1a1a1c"/><rect x="120" y="328" width="286" height="162" rx="10" fill="#f5b818"/><path d="M60 497Q120 484 200 486H400Q440 486 462 498L455 502H70Z" fill="#f5b818"/><rect x="138" y="345" width="250" height="126" fill="#f6f4f4"/><rect x="160" y="398.3" width="202.0" height="21.7" fill="#e58a78"/></g><g transform="translate(580 420) scale(.24324)"><path d="M325 130C320 70 360 48 397 48C434 48 474 70 468 130V215H436V120H358V215H325Z" fill="#1a1a1c"/><path d="M300 455H487V762H437V510H350V762H300Z" fill="#263c4c"/><path d="M243 798Q250 770 300 757H350V798Z" fill="#2b2b2e"/><path d="M375 798Q385 770 437 757H487V798Z" fill="#2b2b2e"/><path d="M497 485H545V540Q545 562 500 566Z" fill="#e2b88f"/><clipPath id="swm"><path d="M237 270Q240 222 290 218H500Q550 222 552 270V492H497V465H237Z"/></clipPath><g clip-path="url(#swm)"><rect x="230" y="210" width="330" height="290" fill="#6a6a6c"/><rect x="230" y="232" width="330" height="14" fill="#1fc49a"/><rect x="230" y="262" width="330" height="8" fill="#8a8a8c"/><rect x="230" y="287" width="330" height="9" fill="#f08a1c"/><rect x="230" y="316" width="330" height="30" fill="#1fc49a"/><rect x="230" y="352" width="330" height="10" fill="#f08a1c"/><rect x="230" y="376" width="330" height="8" fill="#8a8a8c"/><rect x="230" y="396" width="330" height="24" fill="#1fc49a"/><rect x="230" y="421" width="330" height="8" fill="#f08a1c"/><rect x="230" y="448" width="330" height="10" fill="#1fc49a"/><rect x="230" y="474" width="330" height="8" fill="#f08a1c"/><rect x="294" y="300" width="5" height="170" fill="#6a6a6c" opacity=".6"/><rect x="492" y="300" width="5" height="200" fill="#6a6a6c" opacity=".6"/></g><rect x="356" y="180" width="82" height="45" fill="#d9a97e"/><path d="M318 218H478Q450 262 397 264Q345 262 318 218Z" fill="#e2b88f"/><rect x="312" y="120" width="168" height="30" rx="12" fill="#e2b88f"/><path d="M328 95H466V150Q466 200 397 203Q328 200 328 150Z" fill="#e6bd94"/><path d="M324 132C318 60 375 48 397 48C425 48 474 62 468 122L466 100Q420 88 330 128Z" fill="#1a1a1c"/><rect x="68" y="452" width="254" height="152" rx="8" fill="#29c0ee"/><rect x="82" y="468" width="226" height="110" fill="#f4f2f3"/><rect x="101" y="508.7" width="185.0" height="20.3" fill="#e58a78"/></g><g transform="translate(820 400) scale(.2651)"><path d="M165 480H337V797H290V528H210V797H165Z" fill="#f8f320"/><path d="M163 833V797H215Q250 805 265 833Z" fill="#5a3a28"/><path d="M290 833V797H342Q378 805 392 833Z" fill="#5a3a28"/><path d="M112 335H157V560Q150 580 125 575Q110 560 112 520Z" fill="#b98d6b"/><path d="M335 420H500Q495 455 450 458H380Q340 455 335 430Z" fill="#b98d6b"/><path d="M105 300Q108 258 150 254H345Q385 258 392 300V345H335V485H160V345H105Z" fill="#58585a"/><path d="M222 225H280V255L250 275L222 255Z" fill="#a87f5f"/><rect x="170" y="158" width="160" height="34" rx="14" fill="#b98d6b"/><path d="M187 135H315V205Q310 236 251 238Q192 236 187 205Z" fill="#b98d6b"/><path d="M187 145C185 100 225 84 251 84C277 84 317 100 315 145Q251 132 187 145Z" fill="#1a1a1c"/><rect x="352" y="295" width="228" height="138" rx="6" fill="#f07d1c"/><rect x="365" y="305" width="205" height="104" fill="#f4f2f3"/><rect x="384" y="348.1" width="167.0" height="18.9" fill="#e58a78"/></g><clipPath id="clm"><rect x="1036" y="290" width="300" height="268.200"/></clipPath><g fill="#fdfdfd" clip-path="url(#clm)"><circle cx="1321" cy="480.6" r="145"/><circle cx="1165" cy="502.5" r="55.6"/><rect x="1165" y="470" width="170" height="88.200"/></g><rect x="1210" y="481" width="56" height="38" fill="#f8f8f8" opacity=".6"/><circle cx="1044" cy="505.5" r="3.300" fill="#fff"/><rect x="1205" y="478" width="58" height="42" fill="#1f6fb5"/><path d="M1214 488h20v22h-20zM1236 494l16-8v26l-16-8z" fill="#fff"/><rect x="1036" y="482" width="30" height="40" fill="#e2452a"/><rect x="1044" y="492" width="14" height="20" fill="#fff"/></g></svg>
<!-- p5_slide -->
<div class="abs" style="left:272.0px;top:189.0px;width:1015.0px;height:570.0px;background:#9a9a9a;"></div>
<svg class="abs" style="left:273px;top:189px" width="1014" height="570" viewBox="310 221 1014 570"><rect x="310" y="221" width="1014" height="570" fill="#000"/><clipPath id="vid"><rect x="310" y="290" width="1014" height="431"/></clipPath><g clip-path="url(#vid)"><rect x="310" y="290" width="709" height="431" fill="#cf2c02"/><rect x="1019" y="290" width="19" height="431" fill="#fdfdfd"/><rect x="1036.500" y="290" width="288" height="431" fill="#90d444"/><g fill="#fff"><ellipse cx="397.4" cy="500.7" rx="5" ry="4"/><ellipse cx="399.9" cy="482.4" rx="5" ry="4"/><ellipse cx="402.8" cy="464.9" rx="5" ry="4"/><ellipse cx="406.9" cy="447" rx="5" ry="4"/><ellipse cx="412.3" cy="429.2" rx="5" ry="4"/><ellipse cx="419.6" cy="411.3" rx="5" ry="4"/><ellipse cx="428" cy="394.9" rx="5" ry="4"/><ellipse cx="439.3" cy="378.5" rx="5" ry="4"/><ellipse cx="452.4" cy="363.9" rx="5" ry="4"/><ellipse cx="468.1" cy="349.7" rx="5" ry="4"/><ellipse cx="485.6" cy="337.3" rx="5" ry="4"/><ellipse cx="504.6" cy="326.3" rx="5" ry="4"/><ellipse cx="525" cy="316.9" rx="5" ry="4"/><ellipse cx="546.5" cy="308.5" rx="5" ry="4"/><ellipse cx="568.4" cy="301.2" rx="5" ry="4"/><ellipse cx="591" cy="295" rx="5" ry="4"/><ellipse cx="614" cy="290.6" rx="5" ry="4"/><ellipse cx="626.4" cy="519.3" rx="5" ry="4"/><ellipse cx="626.4" cy="500.7" rx="5" ry="4"/><ellipse cx="628.2" cy="482.4" rx="5" ry="4"/><ellipse cx="630.4" cy="464.9" rx="5" ry="4"/><ellipse cx="634.4" cy="447" rx="5" ry="4"/><ellipse cx="639.9" cy="429.2" rx="5" ry="4"/><ellipse cx="647.6" cy="411.3" rx="5" ry="4"/><ellipse cx="656.7" cy="394.9" rx="5" ry="4"/><ellipse cx="668.3" cy="378.9" rx="5" ry="4"/><ellipse cx="682.6" cy="364.6" rx="5" ry="4"/><ellipse cx="699.7" cy="351.9" rx="5" ry="4"/><ellipse cx="718.3" cy="340.2" rx="5" ry="4"/><ellipse cx="738.4" cy="330.3" rx="5" ry="4"/><ellipse cx="759.9" cy="322.3" rx="5" ry="4"/><ellipse cx="782.1" cy="315.4" rx="5" ry="4"/><ellipse cx="804.7" cy="309.2" rx="5" ry="4"/><ellipse cx="828" cy="304" rx="5" ry="4"/><ellipse cx="851.6" cy="299.9" rx="5" ry="4"/><ellipse cx="875.2" cy="296.7" rx="5" ry="4"/><ellipse cx="899.2" cy="294" rx="5" ry="4"/><ellipse cx="923.2" cy="291.7" rx="5" ry="4"/><ellipse cx="947" cy="290.4" rx="5" ry="4"/><ellipse cx="970.7" cy="289.5" rx="5" ry="4"/><ellipse cx="941.3" cy="467.9" rx="5" ry="4"/><ellipse cx="943.6" cy="450.3" rx="5" ry="4"/><ellipse cx="945.8" cy="431.7" rx="5" ry="4"/><ellipse cx="950.4" cy="414" rx="5" ry="4"/><ellipse cx="956.3" cy="396.4" rx="5" ry="4"/><ellipse cx="964" cy="379.1" rx="5" ry="4"/><ellipse cx="973.9" cy="362.8" rx="5" ry="4"/><ellipse cx="985.7" cy="347" rx="5" ry="4"/><ellipse cx="1000.6" cy="332.5" rx="5" ry="4"/><ellipse cx="1016.5" cy="318.9" rx="5" ry="4"/></g><g transform="translate(340 440) scale(.22099)"><g fill="#16161a"><rect x="728" y="384" width="48" height="32" rx="14"/><rect x="737" y="398" width="16" height="205"/><rect x="432" y="583" width="321" height="22" rx="8"/><rect x="565" y="600" width="46" height="32" rx="8"/><rect x="508" y="600" width="44" height="150"/><path d="M350 772C370 735 450 725 530 722C610 725 690 735 710 772L690 790C640 760 590 752 555 752V800H505V752C470 752 420 760 370 790Z"/><circle cx="380" cy="772" r="29"/><circle cx="680" cy="772" r="29"/></g><rect x="705" y="265" width="30" height="236" rx="8" fill="#27b7ea"/><path d="M345 565H708L694 586H372Z" fill="#27b7ea"/><path d="M265 490H690V525Q690 575 640 575H365V745H265Z" fill="#2a2c7d"/><path d="M180 800Q186 760 235 748L340 745V800Z" fill="#fff"/><rect x="600" y="245" width="82" height="38" fill="#d9a97e"/><path d="M505 125L560 140L620 160L660 235L600 262H522L505 236L512 214L480 205L490 186L497 160Z" fill="#e2b88f"/><path d="M497 82L525 100L540 78L565 95L600 85L640 80L690 90L730 250L680 240L655 236L622 160L600 150L585 165L592 200L575 206L560 150L520 140L505 120Z" fill="#1a1a1c"/><path d="M690 268H625Q560 276 558 345V440H612V388H668V490H690Z" fill="#3b3b3b"/><rect x="612" y="388" width="56" height="102" fill="#e2b88f"/><path d="M668 447H440Q408 452 412 490H668Z" fill="#e2b88f"/><rect x="497" y="444" width="28" height="47" fill="#1a1a1c"/><rect x="120" y="328" width="286" height="162" rx="10" fill="#f5b818"/><path d="M60 497Q120 484 200 486H400Q440 486 462 498L455 502H70Z" fill="#f5b818"/><rect x="138" y="345" width="250" height="126" fill="#f6f4f4"/><path d="M160 397.7l18.6 -7.4l10.5 3.1v31.6l-10.5 3.1l-18.6 -6.8l18.6 1.9v-27.9l-10.5 3.1v18.0z" fill="#d8391c"/><text x="207" y="420" font-size="31" fill="#d8391c" stroke="#d8391c" stroke-width=".5" textLength="155" lengthAdjust="spacingAndGlyphs">Office 365</text></g><g transform="translate(580 420) scale(.24324)"><path d="M325 130C320 70 360 48 397 48C434 48 474 70 468 130V215H436V120H358V215H325Z" fill="#1a1a1c"/><path d="M300 455H487V762H437V510H350V762H300Z" fill="#263c4c"/><path d="M243 798Q250 770 300 757H350V798Z" fill="#2b2b2e"/><path d="M375 798Q385 770 437 757H487V798Z" fill="#2b2b2e"/><path d="M497 485H545V540Q545 562 500 566Z" fill="#e2b88f"/><clipPath id="sw"><path d="M237 270Q240 222 290 218H500Q550 222 552 270V492H497V465H237Z"/></clipPath><g clip-path="url(#sw)"><rect x="230" y="210" width="330" height="290" fill="#6a6a6c"/><rect x="230" y="232" width="330" height="14" fill="#1fc49a"/><rect x="230" y="262" width="330" height="8" fill="#8a8a8c"/><rect x="230" y="287" width="330" height="9" fill="#f08a1c"/><rect x="230" y="316" width="330" height="30" fill="#1fc49a"/><rect x="230" y="352" width="330" height="10" fill="#f08a1c"/><rect x="230" y="376" width="330" height="8" fill="#8a8a8c"/><rect x="230" y="396" width="330" height="24" fill="#1fc49a"/><rect x="230" y="421" width="330" height="8" fill="#f08a1c"/><rect x="230" y="448" width="330" height="10" fill="#1fc49a"/><rect x="230" y="474" width="330" height="8" fill="#f08a1c"/><rect x="294" y="300" width="5" height="170" fill="#6a6a6c" opacity=".6"/><rect x="492" y="300" width="5" height="200" fill="#6a6a6c" opacity=".6"/></g><rect x="356" y="180" width="82" height="45" fill="#d9a97e"/><path d="M318 218H478Q450 262 397 264Q345 262 318 218Z" fill="#e2b88f"/><rect x="312" y="120" width="168" height="30" rx="12" fill="#e2b88f"/><path d="M328 95H466V150Q466 200 397 203Q328 200 328 150Z" fill="#e6bd94"/><path d="M324 132C318 60 375 48 397 48C425 48 474 62 468 122L466 100Q420 88 330 128Z" fill="#1a1a1c"/><rect x="68" y="452" width="254" height="152" rx="8" fill="#29c0ee"/><rect x="82" y="468" width="226" height="110" fill="#f4f2f3"/><path d="M101 508.1l17.4 -7.0l9.9 2.9v29.6l-9.9 2.9l-17.4 -6.4l17.4 1.7v-26.1l-9.9 2.9v16.8z" fill="#d8391c"/><text x="148" y="529" font-size="29" fill="#d8391c" stroke="#d8391c" stroke-width=".5" textLength="138" lengthAdjust="spacingAndGlyphs">Office 365</text></g><g transform="translate(820 400) scale(.2651)"><path d="M165 480H337V797H290V528H210V797H165Z" fill="#f8f320"/><path d="M163 833V797H215Q250 805 265 833Z" fill="#5a3a28"/><path d="M290 833V797H342Q378 805 392 833Z" fill="#5a3a28"/><path d="M112 335H157V560Q150 580 125 575Q110 560 112 520Z" fill="#b98d6b"/><path d="M335 420H500Q495 455 450 458H380Q340 455 335 430Z" fill="#b98d6b"/><path d="M105 300Q108 258 150 254H345Q385 258 392 300V345H335V485H160V345H105Z" fill="#58585a"/><path d="M222 225H280V255L250 275L222 255Z" fill="#a87f5f"/><rect x="170" y="158" width="160" height="34" rx="14" fill="#b98d6b"/><path d="M187 135H315V205Q310 236 251 238Q192 236 187 205Z" fill="#b98d6b"/><path d="M187 145C185 100 225 84 251 84C277 84 317 100 315 145Q251 132 187 145Z" fill="#1a1a1c"/><rect x="352" y="295" width="228" height="138" rx="6" fill="#f07d1c"/><rect x="365" y="305" width="205" height="104" fill="#f4f2f3"/><path d="M384 347.6l16.2 -6.5l9.2 2.7v27.5l-9.2 2.7l-16.2 -5.9l16.2 1.6v-24.3l-9.2 2.7v15.7z" fill="#d8391c"/><text x="425" y="367" font-size="27" fill="#d8391c" stroke="#d8391c" stroke-width=".5" textLength="126" lengthAdjust="spacingAndGlyphs">Office 365</text></g><clipPath id="cl"><rect x="1036" y="290" width="300" height="268.200"/></clipPath><g fill="#fdfdfd" clip-path="url(#cl)"><circle cx="1321" cy="480.6" r="145"/><circle cx="1165" cy="502.5" r="55.6"/><rect x="1165" y="470" width="170" height="88.200"/></g><rect x="1210" y="481" width="56" height="38" fill="#f8f8f8" opacity=".6"/><circle cx="1044" cy="505.5" r="3.300" fill="#fff"/><g transform="translate(1030 460) scale(.21529)"><rect x="100" y="88" width="317" height="235" fill="#2b2d83"/><path d="M278 145H370V272H278Z" fill="#fff"/><path d="M290 163h68M290 181h68M290 199h68M290 217h68M290 235h68M290 253h68" stroke="#2b2d83" stroke-width="7"/><path d="M148 140L278 122V290L148 268Z" fill="#fff"/><text x="163" y="236" font-size="92" font-weight="bold" fill="#2b2d83" textLength="96" lengthAdjust="spacingAndGlyphs">W</text></g><g transform="translate(1030 460) scale(.21529)"><rect x="1213" y="78" width="160" height="237" fill="#15843f"/><path d="M1262 133L1375 113V285L1262 265Z" fill="#fff"/><text x="1291" y="229" font-size="84" font-weight="bold" fill="#15843f" textLength="66" lengthAdjust="spacingAndGlyphs">X</text></g></g></svg>
<div class="abs" style="left:269.0px;top:185.0px;width:7.0px;height:7.0px;background:#fff;border:1px solid #a0a0a0;border-radius:1.500px;"></div>
<div class="abs" style="left:776.1px;top:185.0px;width:7.0px;height:7.0px;background:#fff;border:1px solid #a0a0a0;border-radius:1.500px;"></div>
<div class="abs" style="left:1284.0px;top:185.0px;width:7.0px;height:7.0px;background:#fff;border:1px solid #a0a0a0;border-radius:1.500px;"></div>
<div class="abs" style="left:269.0px;top:470.5px;width:7.0px;height:7.0px;background:#fff;border:1px solid #a0a0a0;border-radius:1.500px;"></div>
<div class="abs" style="left:1284.0px;top:470.5px;width:7.0px;height:7.0px;background:#fff;border:1px solid #a0a0a0;border-radius:1.500px;"></div>
<div class="abs" style="left:269.0px;top:756.0px;width:7.0px;height:7.0px;background:#fff;border:1px solid #a0a0a0;border-radius:1.500px;"></div>
<div class="abs" style="left:776.1px;top:756.0px;width:7.0px;height:7.0px;background:#fff;border:1px solid #a0a0a0;border-radius:1.500px;"></div>
<div class="abs" style="left:1284.0px;top:756.0px;width:7.0px;height:7.0px;background:#fff;border:1px solid #a0a0a0;border-radius:1.500px;"></div>
<div class="abs" style="left:779.0px;top:176.5px;width:1.0px;height:9.0px;background:#777;"></div>
<div class="abs" style="left:777.0px;top:176.0px;width:5.5px;height:1.0px;background:#bbb;"></div>
<!-- p6_bottom -->
<div class="abs" style="left:1350.0px;top:176.0px;width:16.0px;height:602.0px;background:#f1f1f1;"></div>
<div class="abs" style="left:1350.0px;top:178.0px;width:15.0px;height:15.0px;background:#fff;border:1px solid #ababab;"></div>
<svg class="abs" style="left:1354.0px;top:183.5px;" width="7" height="4" viewBox="0 0 7 4"><path d="M0 4h7L3.500 0z" fill="#666"/></svg>
<div class="abs" style="left:1350.0px;top:580.4px;width:15.0px;height:123.6px;background:#fff;border:1px solid #ababab;"></div>
<div class="abs" style="left:1350.0px;top:704.5px;width:15.0px;height:14.5px;background:#fff;border:1px solid #c6c6c6;"></div>
<svg class="abs" style="left:1354.0px;top:710.5px;" width="7" height="4" viewBox="0 0 7 4"><path d="M0 0h7L3.500 4z" fill="#666"/></svg>
<svg class="abs" style="left:1354.0px;top:723.6px;" width="7" height="9" viewBox="0 0 7 9"><path d="M0 4h7L3.500 .5zM0 8.500h7L3.500 5z" fill="#666"/></svg>
<svg class="abs" style="left:1354.0px;top:741.7px;" width="7" height="9" viewBox="0 0 7 9"><path d="M0 .5h7L3.500 4zM0 5h7L3.500 8.500z" fill="#666"/></svg>
<div class="abs" style="left:209.0px;top:775.0px;width:1157.0px;height:1.0px;background:#d0d0d0;"></div>
<div class="abs" style="left:209.0px;top:776.0px;width:1157.0px;height:2.0px;background:#f6f9fb;"></div>
<div class="abs" style="left:0.0px;top:778.0px;width:1366.0px;height:21.5px;background:#d24726;"></div>
<span class="t" style="left:7.0px;top:783.5px;font-size:11px;letter-spacing:-0.35px;transform:scaleX(0.983);transform-origin:0 0;color:#fff;">SLIDE 3 OF 3</span>
<svg class="abs" style="left:90.5px;top:782.0px;" width="15" height="14" viewBox="0 0 15 14"><path d="M.6 1.600h4.600l2 1.400v9.600l-2-1.400H.6z" fill="none" stroke="#fff" stroke-width="1.100"/><path d="M7.200 3l2-1.400h3.800v4M7.200 12.600l2-1.400h1" fill="none" stroke="#fff" stroke-width="1.100"/><path d="M9.200 8.400l2 2.400l3.200-4.600" fill="none" stroke="#fff" stroke-width="1.300"/></svg>
<span class="t" style="left:122.0px;top:783.5px;font-size:11px;letter-spacing:-0.35px;transform:scaleX(0.944);transform-origin:0 0;color:#fff;">ENGLISH (UNITED STATES)</span>
<svg class="abs" style="left:849.5px;top:783.0px;" width="11" height="12" viewBox="0 0 11 12"><path d="M5.500 0L8.500 3.200H2.500z" fill="#fff"/><path d="M0 5.200h11M0 8h11M0 10.800h7" stroke="#fff" stroke-width="1.200"/></svg>
<span class="t" style="left:866.5px;top:783.5px;font-size:11px;letter-spacing:-0.35px;transform:scaleX(0.904);transform-origin:0 0;color:#fff;">NOTES</span>
<svg class="abs" style="left:920.5px;top:783.0px;" width="13" height="12" viewBox="0 0 13 12"><path d="M0 0h12.500v8H6.500L3.500 11.500V8H0z" fill="#fff"/></svg>
<span class="t" style="left:937.0px;top:783.5px;font-size:11px;letter-spacing:-0.45px;color:#fff;">COMMENTS</span>
<div class="abs" style="left:1017.0px;top:778.0px;width:37.5px;height:21.5px;background:#b83b1d;"></div>
<svg class="abs" style="left:1029.0px;top:782.0px;" width="14" height="13" viewBox="0 0 14 13"><rect x=".9" y=".9" width="12.200" height="10.600" fill="none" stroke="#fff" stroke-width="1.600"/><rect x=".2" y=".2" width="3" height="12" fill="#fff"/><rect x="4.800" y="2.300" width="6.600" height="4.400" fill="#fff"/><path d="M3 8.800h10" stroke="#fff" stroke-width="1.200"/></svg>
<svg class="abs" style="left:1067.0px;top:782.0px;" width="15" height="13" viewBox="0 0 15 13"><rect x="0" y="0" width="6.200" height="5.400" fill="#fff"/><rect x="8.300" y="0" width="6.200" height="5.400" fill="#fff"/><rect x="0" y="7.400" width="6.200" height="5.400" fill="#fff"/><rect x="8.300" y="7.400" width="6.200" height="5.400" fill="#fff"/></svg>
<svg class="abs" style="left:1104.5px;top:782.0px;" width="14" height="13" viewBox="0 0 14 13"><path d="M.6 1.200l5.800 1.200V12.200L.6 11zM13.400 1.200L7.600 2.400V12.200l5.800-1.200z" fill="none" stroke="#fff" stroke-width="1.100"/><path d="M2 4l3 .6M2 6.200l3 .6M2 8.400l3 .6M12 4l-3 .6M12 6.200l-3 .6M12 8.400l-3 .6" stroke="#fff" stroke-width=".9"/></svg>
<svg class="abs" style="left:1143.0px;top:782.0px;" width="13" height="13" viewBox="0 0 13 13"><path d="M0 .8h13" stroke="#fff" stroke-width="1.400"/><rect x="1.600" y="1.400" width="9.800" height="6" fill="none" stroke="#fff" stroke-width="1.200"/><path d="M6.500 7.600v4M3.500 12.200h6" stroke="#fff" stroke-width="1.200"/></svg>
<div class="abs" style="left:1174.5px;top:788.0px;width:5.0px;height:2.0px;background:#fff;"></div>
<div class="abs" style="left:1184.5px;top:788.5px;width:98.5px;height:1.0px;background:#fff;"></div>
<div class="abs" style="left:1222.0px;top:783.5px;width:4.0px;height:11.0px;background:#fff;"></div>
<div class="abs" style="left:1233.5px;top:786.0px;width:1.0px;height:6.0px;background:#fff;"></div>
<div class="abs" style="left:1288.0px;top:788.0px;width:7.5px;height:2.0px;background:#fff;"></div>
<div class="abs" style="left:1290.8px;top:785.2px;width:2.0px;height:7.6px;background:#fff;"></div>
<span class="t" style="left:1310.5px;top:783.5px;font-size:11px;letter-spacing:-0.26px;color:#fff;">80%</span>
<svg class="abs" style="left:1345.5px;top:782.0px;" width="14" height="14" viewBox="0 0 14 14"><rect x=".6" y=".6" width="12.800" height="12.800" fill="none" stroke="#fff" stroke-width="1.200"/><path d="M7 2v10M2 7h10M7 2l-1.800 2M7 2l1.800 2M7 12l-1.800-2M7 12l1.800-2M2 7l2-1.800M2 7l2 1.800M12 7l-2-1.800M12 7l-2 1.800" stroke="#fff" stroke-width="1" fill="none"/></svg>
<div class="abs" style="left:0.0px;top:799.3px;width:1366.0px;height:1.7px;background:#5e2416;"></div>
<div class="abs" style="left:60.0px;top:800.0px;width:45.0px;height:1.0px;background:#f4f4f4;"></div>
<div class="abs" style="left:108.0px;top:800.0px;width:40.0px;height:1.0px;background:#f4f4f4;"></div>
<div class="abs" style="left:152.0px;top:800.0px;width:42.0px;height:1.0px;background:#f4f4f4;"></div>
<div class="abs" style="left:198.0px;top:800.0px;width:40.0px;height:1.0px;background:#f4f4f4;"></div>
<div class="abs" style="left:243.0px;top:800.0px;width:42.0px;height:1.0px;background:#f4f4f4;"></div>
<div class="abs" style="left:0.0px;top:800.6px;width:1172.0px;height:4.4px;background:#ff6a2b;"></div>
<div class="abs" style="left:1172.0px;top:800.6px;width:194.0px;height:4.4px;background:#b9b9b9;"></div>
<div class="abs" style="left:0.0px;top:805.0px;width:1366.0px;height:33.0px;background:#ebebeb;"></div>
<svg class="abs" style="left:14.0px;top:814.0px;" width="14" height="17" viewBox="0 0 14 17"><path d="M0 0L14 8.300L0 16.600z" fill="#7b7b7b"/></svg>
<svg class="abs" style="left:45.5px;top:812.0px;" width="19" height="20" viewBox="0 0 19 20"><path d="M9.600 3.200A7.600 7.600 0 1 1 2.600 7.600" fill="none" stroke="#7b7b7b" stroke-width="2.200"/><path d="M10.400 -.4v7L5 3.100z" fill="#7b7b7b"/><text x="4.600" y="15.200" font-size="8.500" font-weight="bold" fill="#7b7b7b">10</text></svg>
<svg class="abs" style="left:79.0px;top:814.0px;" width="15" height="17" viewBox="0 0 15 17"><path d="M0 0h10l4.600 4.600V16.600H0z" fill="#7b7b7b"/><path d="M10 0v4.600h4.600" fill="#ebebeb" opacity=".6"/><path d="M3 8h8.600M3 10.600h8.600M3 13.200h8.600" stroke="#ebebeb" stroke-width="1.100"/></svg>
<svg class="abs" style="left:108.0px;top:814.0px;" width="20" height="17" viewBox="0 0 20 17"><path d="M0 5.200h4L10 .2V16.400L4 11.400H0z" fill="#7b7b7b"/><path d="M12 5.800q1.800 2.500 0 5M14.200 3.800q3.400 4.500 0 9M16.400 1.800q5 6.500 0 13" fill="none" stroke="#7b7b7b" stroke-width="1.300"/></svg>
<div class="abs" style="left:144.0px;top:820.4px;width:89.0px;height:3.2px;background:#78b0d4;border-bottom:1px solid #5b96bd;"></div>
<div class="abs" style="left:232.0px;top:817.0px;width:11.0px;height:11.0px;background:#cdcdcd;border:1px solid #8a8a8a;border-radius:1px;"></div>
<svg class="abs" style="left:613.0px;top:804.0px;" width="150" height="34" viewBox="0 0 150 34"><g transform="scale(.104167)" fill="none" stroke="#a4a4a4" stroke-width="10.500">
<path d="M250 54H355L411 108V200L357 250H248L194 200V108Z" stroke-linejoin="round"/>
<path d="M226 80H382M290 80V250M330 80V250"/>
<path d="M268 106H236L216 124V142H256V166M216 166V194L236 216H268M238 190H268"/>
<path d="M352 106H378L396 124V142H354M396 166V194L376 216H352M352 166H374V190H352"/>
<path d="M268 277H356" stroke-width="14"/></g></svg>
<span class="t" style="left:662.8px;top:809.0px;font-size:22px;letter-spacing:-0.35px;transform:scaleX(0.925);transform-origin:0 0;color:#9a9a9a;font-weight:normal;-webkit-text-stroke:.7px #ebebeb;">LaSkola</span>
<svg class="abs" style="left:1242.0px;top:811.5px;" width="21" height="21" viewBox="0 0 21 21"><circle cx="10.500" cy="10.500" r="9.300" fill="none" stroke="#a8a8a8" stroke-width="2"/><path d="M10.500 4.500v6.500l4 3" fill="none" stroke="#a8a8a8" stroke-width="1.800"/></svg>
<span class="t" style="left:1272.0px;top:810.9px;font-size:19px;letter-spacing:1.04px;color:#ababab;font-weight:bold;font-family:'Liberation Serif','DejaVu Serif',serif;">01:08</span>
<svg class="abs" style="left:1339.0px;top:813.0px;" width="18" height="18" viewBox="0 0 18 18"><path d="M1 6V1h5M12 1h5v5M17 12v5h-5M6 17H1v-5" fill="none" stroke="#7b7b7b" stroke-width="2"/></svg>
<!-- p7_man -->
<svg class="abs" style="left:1143px;top:488px" width="260" height="290" viewBox="1180 520 260 290"><clipPath id="mc"><rect x="1180" y="520" width="260" height="290"/></clipPath><g clip-path="url(#mc)"><g transform="translate(1180 520) scale(.35374)"><path d="M231 740H450V835H238Z" fill="#0b2239"/><path d="M330 750L318 835" stroke="#0e2a45" stroke-width="5" fill="none"/><path d="M173 706L214 712L209 751L207 776L198 781L195 764L195 782L191 812L166 778L163 750Z" fill="#f3c48d"/><path d="M186 744L180 790L191 810L194 770Z" fill="#c79a6a" opacity=".7"/><path d="M459 709L507 717Q513 750 506 776L471 817L459 805L465 768L458 786L450 784Q446 760 450 738Z" fill="#f3c48d"/><path d="M476 770L468 806M486 764L474 808M496 758L482 802" stroke="#c79a6a" stroke-width="1.500" fill="none"/><path d="M459 709L507 718L506 728L459 718Z" fill="#8a4a1e"/><path d="M478 716L500 720L499 729L477 725Z" fill="#d8ecf2"/><path d="M169 694L219 705L218 716L168 704Z" fill="#f4f4f4"/><path d="M456 703L519 712L518 720L457 711Z" fill="#f4f4f4"/><path d="M290 258L205 322Q190 332 190 370L179 588L169 696L218 707L220 742Q224 748 240 749L448 746L456 706L519 715L536 588Q548 500 530 430L500 330Q494 308 470 298L396 248Z" fill="#0f2d4b"/><path d="M468 505Q460 600 456 706" fill="none" stroke="#dfe5ea" stroke-width="3"/><path d="M298 440V690Q298 740 262 749M301 697Q312 735 352 748" fill="none" stroke="#0a2036" stroke-width="3"/><path d="M220 707L228 560" fill="none" stroke="#0a2036" stroke-width="2.500"/><circle cx="308" cy="487" r="8" fill="#071727"/><circle cx="308" cy="546" r="8" fill="#071727"/><circle cx="310" cy="603" r="8" fill="#071727"/></g><g transform="translate(1240 535) scale(.16018)"><path d="M262 470L300 440L490 425L500 450L290 870L268 720Z" fill="#e6e6e8"/><path d="M262 475L292 452L348 522L272 610Z" fill="#fdfdfd"/><path d="M492 428L468 440L378 545L420 610L500 455Z" fill="#fdfdfd"/><path d="M320 522L358 510L383 552L346 604L318 562Z" fill="#d3201f"/><path d="M320 600L350 598L348 735L282 862L272 735Z" fill="#e8261c"/><path d="M268 468L188 582L276 872L282 862L268 720Z" fill="#0d2944"/><path d="M496 436L548 548L282 884L276 872L290 862L500 455Z" fill="#0d2944"/><path d="M188 582L276 872M548 548L282 884M548 548L528 560L560 520" fill="none" stroke="#08192b" stroke-width="4"/><path d="M296 400L470 380L472 442L378 545L348 522L296 452Z" fill="#d9a36f"/><path d="M296 440L345 500L440 455L470 420L470 380L430 420Q380 450 300 425Z" fill="#c48d5c"/><path d="M478 240Q512 228 510 268Q506 305 470 315Z" fill="#e4b07c"/><path d="M238 190Q250 150 330 140Q440 145 470 215L478 300Q470 380 420 420Q370 455 320 440Q285 425 268 380Q246 320 244 260Z" fill="#f2c891"/><path d="M420 170Q470 215 478 300Q470 380 420 420Q370 455 330 442Q400 420 428 350Q445 290 420 170Z" fill="#dca873" opacity=".8"/><path d="M232 205Q215 120 300 64Q380 40 452 72Q505 120 503 200L480 258Q470 250 462 215Q440 170 405 158Q340 140 270 158Q245 170 240 205Z" fill="#6e4023"/><path d="M300 100Q360 80 420 100M290 125Q350 105 440 130" fill="none" stroke="#8a5632" stroke-width="5"/><path d="M244 236L300 226L302 234L246 244ZM346 228L424 222L428 232L348 238Z" fill="#5a3318"/><path d="M256 256Q278 244 300 256Q278 266 256 256Z" fill="#fff"/><path d="M356 252Q382 240 408 252Q382 264 356 252Z" fill="#fff"/><circle cx="280" cy="255" r="8" fill="#3c2a20"/><circle cx="384" cy="251" r="8" fill="#3c2a20"/><path d="M318 262Q300 310 296 322Q316 334 344 322" fill="none" stroke="#c99465" stroke-width="5"/><path d="M282 362Q330 350 378 358Q360 396 328 396Q296 394 282 362Z" fill="#8c3626"/><path d="M290 364Q330 356 370 362L366 372Q330 366 294 374Z" fill="#fff"/><path d="M296 384Q330 392 360 382Q346 398 328 398Q306 396 296 384Z" fill="#c96a5a"/></g></g></svg>
</div>
</body>
</html>
